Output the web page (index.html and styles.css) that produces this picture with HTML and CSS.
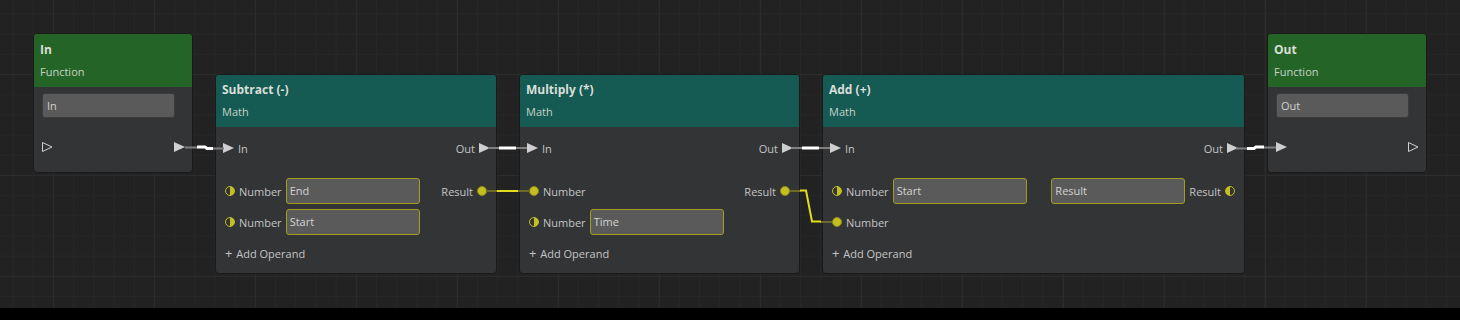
FILE: index.html
```html
<!DOCTYPE html>
<html lang="en">
<head>
  <meta charset="UTF-8">
  <title>Function Graph</title>
  <link rel="stylesheet" href="styles.css">
</head>
<body>
  <div class="graph">

    <!-- In -->
    <div class="node node-in">
      <div class="node-head head-fn">
        <div class="node-title">In</div>
        <div class="node-kind">Function</div>
      </div>
      <div class="fn-body">
        <div class="fn-field">In</div>
        <div class="fn-row">
          <svg class="pin-exec" width="11" height="10" viewBox="0 0 11 10"><polygon points="0.5,0.5 10,5 0.5,9.5" class="tri-open" /></svg>
          <svg class="pin-exec" width="11" height="10" viewBox="0 0 11 10"><polygon points="0,0 11,5 0,10" class="tri-fill" /></svg>
        </div>
      </div>
    </div>

    <!-- Subtract -->
    <div class="node node-subtract">
      <div class="node-head head-math">
        <div class="node-title">Subtract (-)</div>
        <div class="node-kind">Math</div>
      </div>
      <div class="node-body">
        <div class="exec-row">
          <span class="port">
            <svg class="pin-exec" width="11" height="10" viewBox="0 0 11 10"><polygon points="0,0 11,5 0,10" class="tri-fill" /></svg>
            In
          </span>
          <span class="port">
            Out
            <svg class="pin-exec" width="11" height="10" viewBox="0 0 11 10"><polygon points="0,0 11,5 0,10" class="tri-fill" /></svg>
          </span>
        </div>
        <div class="data-row">
          <span class="port">
            <span class="pin-half"></span>
            <span class="lbl">Number</span>
            <span class="field">End</span>
          </span>
          <span class="port">
            <span class="lbl">Result</span>
            <span class="pin-dot"></span>
          </span>
        </div>
        <div class="data-row">
          <span class="port">
            <span class="pin-half"></span>
            <span class="lbl">Number</span>
            <span class="field">Start</span>
          </span>
        </div>
        <div class="add-row"><span class="plus">+</span> Add Operand</div>
      </div>
    </div>

    <!-- Multiply -->
    <div class="node node-multiply">
      <div class="node-head head-math">
        <div class="node-title">Multiply (*)</div>
        <div class="node-kind">Math</div>
      </div>
      <div class="node-body">
        <div class="exec-row">
          <span class="port">
            <svg class="pin-exec" width="11" height="10" viewBox="0 0 11 10"><polygon points="0,0 11,5 0,10" class="tri-fill" /></svg>
            In
          </span>
          <span class="port">
            Out
            <svg class="pin-exec" width="11" height="10" viewBox="0 0 11 10"><polygon points="0,0 11,5 0,10" class="tri-fill" /></svg>
          </span>
        </div>
        <div class="data-row">
          <span class="port">
            <span class="pin-dot"></span>
            <span class="lbl">Number</span>
          </span>
          <span class="port">
            <span class="lbl">Result</span>
            <span class="pin-dot"></span>
          </span>
        </div>
        <div class="data-row">
          <span class="port">
            <span class="pin-half"></span>
            <span class="lbl">Number</span>
            <span class="field">Time</span>
          </span>
        </div>
        <div class="add-row"><span class="plus">+</span> Add Operand</div>
      </div>
    </div>

    <!-- Add -->
    <div class="node node-add">
      <div class="node-head head-math">
        <div class="node-title">Add (+)</div>
        <div class="node-kind">Math</div>
      </div>
      <div class="node-body">
        <div class="exec-row">
          <span class="port">
            <svg class="pin-exec" width="11" height="10" viewBox="0 0 11 10"><polygon points="0,0 11,5 0,10" class="tri-fill" /></svg>
            In
          </span>
          <span class="port">
            Out
            <svg class="pin-exec" width="11" height="10" viewBox="0 0 11 10"><polygon points="0,0 11,5 0,10" class="tri-fill" /></svg>
          </span>
        </div>
        <div class="data-row">
          <span class="port">
            <span class="pin-half"></span>
            <span class="lbl">Number</span>
            <span class="field">Start</span>
          </span>
          <span class="port">
            <span class="field">Result</span>
            <span class="lbl">Result</span>
            <span class="pin-half pin-half-out"></span>
          </span>
        </div>
        <div class="data-row">
          <span class="port">
            <span class="pin-dot"></span>
            <span class="lbl">Number</span>
          </span>
        </div>
        <div class="add-row"><span class="plus">+</span> Add Operand</div>
      </div>
    </div>

    <!-- Out -->
    <div class="node node-out">
      <div class="node-head head-fn">
        <div class="node-title">Out</div>
        <div class="node-kind">Function</div>
      </div>
      <div class="fn-body">
        <div class="fn-field">Out</div>
        <div class="fn-row">
          <svg class="pin-exec" width="11" height="10" viewBox="0 0 11 10"><polygon points="0,0 11,5 0,10" class="tri-fill" /></svg>
          <svg class="pin-exec" width="11" height="10" viewBox="0 0 11 10"><polygon points="0.5,0.5 10,5 0.5,9.5" class="tri-open" /></svg>
        </div>
      </div>
    </div>

    <!-- wires, drawn over the node edges -->
    <svg class="wires" width="1460" height="308">
      <!-- exec wires -->
      <g class="stub-exec">
        <line x1="185" y1="147.5" x2="198" y2="147.5" />
        <line x1="212" y1="148.5" x2="224" y2="148.5" />
        <line x1="488" y1="148" x2="500" y2="148" />
        <line x1="515" y1="148" x2="527" y2="148" />
        <line x1="791" y1="148" x2="803" y2="148" />
        <line x1="818" y1="148" x2="830" y2="148" />
        <line x1="1236" y1="148.5" x2="1248" y2="148.5" />
        <line x1="1263" y1="147.5" x2="1276" y2="147.5" />
      </g>
      <g class="wire-exec">
        <path d="M197 147 H205 L207 148.5 H213" />
        <path d="M499 148 H516" />
        <path d="M802 148 H819" />
        <path d="M1247 148.5 H1254 L1256 147 H1264" />
      </g>
      <!-- data wires -->
      <g class="stub-data">
        <line x1="486" y1="191" x2="498" y2="191" />
        <line x1="517" y1="191" x2="530" y2="191" />
        <line x1="790" y1="191" x2="801" y2="191" />
        <line x1="820" y1="222" x2="832" y2="222" />
      </g>
      <g class="wire-data">
        <path d="M497 191 H518" />
        <path d="M800 190.5 H806 L812 221.5 H821" />
      </g>
    </svg>

  </div>
</body>
</html>
```

FILE: styles.css
```css
body {
  margin: 0;
  background-color: #000;
  font-family: 'Open Sans', 'Noto Sans', sans-serif;
  font-size: 11px;
  color: #c4c4c4;
}

.graph {
  position: relative;
  width: 1460px;
  height: 308px;
  overflow: hidden;
  background-color: #222222;
  background-image:
    linear-gradient(to right, #2c2c2c 1px, transparent 1px),
    linear-gradient(to bottom, #2c2c2c 1px, transparent 1px),
    linear-gradient(to right, #272727 1px, transparent 1px),
    linear-gradient(to bottom, #272727 1px, transparent 1px);
  background-size: 101px 101px, 101px 101px, 20.2px 20.2px, 20.2px 20.2px;
  background-position: 53px 74px, 53px 74px, 53px 74px, 53px 74px;
}

.wires {
  position: absolute;
  left: 0;
  top: 0;
  pointer-events: none;
}

.stub-exec line {
  stroke: #808080;
  stroke-width: 2;
}

.wire-exec path {
  stroke: #ffffff;
  stroke-width: 3;
  fill: none;
}

.stub-data line {
  stroke: #6b6a2c;
  stroke-width: 2;
}

.wire-data path {
  stroke: #e2dc1a;
  stroke-width: 2;
  fill: none;
}

/* nodes */

.node {
  position: absolute;
  box-sizing: border-box;
  background-color: #333436;
  border: 1px solid #1a1a1a;
  border-radius: 4px;
}

.node-in {
  left: 33px;
  top: 33px;
  width: 160px;
  height: 140px;
}

.node-out {
  left: 1267px;
  top: 33px;
  width: 160px;
  height: 140px;
}

.node-subtract {
  left: 215px;
  top: 74px;
  width: 282px;
  height: 200px;
}

.node-multiply {
  left: 519px;
  top: 74px;
  width: 281px;
  height: 200px;
}

.node-add {
  left: 822px;
  top: 74px;
  width: 423px;
  height: 200px;
}

.node-head {
  box-sizing: border-box;
  padding: 6px 6px 0;
  border-radius: 3px 3px 0 0;
}

.head-fn {
  height: 53px;
  padding-top: 7px;
  background-color: #246527;
}

.head-math {
  height: 52px;
  background-color: #155a53;
}

.node-title {
  font-weight: bold;
  font-size: 12px;
  line-height: 18px;
  color: #d9dfd9;
}

.node-kind {
  margin-top: 4px;
  line-height: 18px;
  color: #c6d2c8;
}

.node-body {
  padding-top: 11px;
}

/* function nodes */

.fn-body {
  padding: 6px 0 0 8px;
}

.fn-field {
  width: 133px;
  height: 25px;
  box-sizing: border-box;
  background-color: #5a5a5a;
  border: 1px solid #3c3c3c;
  border-radius: 3px;
  padding: 0 4px;
  line-height: 23px;
  color: #d2d2d2;
}

.fn-row {
  display: flex;
  justify-content: space-between;
  align-items: center;
  height: 20px;
  margin-top: 19px;
  padding-right: 7px;
}

.tri-fill {
  fill: #cfcfcf;
}

.tri-open {
  fill: none;
  stroke: #d0d0d0;
  stroke-width: 1;
}

/* math nodes */

.exec-row {
  display: flex;
  justify-content: space-between;
  align-items: center;
  height: 20px;
  padding: 0 6px 0 7px;
}

.port {
  display: flex;
  align-items: center;
  gap: 4px;
}

.pin-exec {
  display: block;
}

.data-row {
  display: flex;
  justify-content: space-between;
  align-items: center;
  height: 26px;
  margin-top: 5px;
  padding: 0 9px;
}

.exec-row + .data-row {
  margin-top: 20px;
}

.pin-dot {
  width: 10px;
  height: 10px;
  box-sizing: border-box;
  border-radius: 50%;
  background-color: #c3bf1f;
  border: 1px solid #8d8a18;
}

.pin-half {
  width: 10px;
  height: 10px;
  box-sizing: border-box;
  border-radius: 50%;
  border: 1.5px solid #c3bf1f;
  background: linear-gradient(to right, #333436 50%, #c3bf1f 50%);
}

.pin-half-out {
  background: linear-gradient(to right, #c3bf1f 50%, #333436 50%);
}

.field {
  width: 134px;
  height: 26px;
  box-sizing: border-box;
  background-color: #5a5a5a;
  border: 1px solid #a19e1e;
  border-radius: 3px;
  padding: 0 3px;
  line-height: 24px;
  color: #d4d4d4;
}

.add-row {
  height: 26px;
  line-height: 26px;
  margin-top: 5px;
  padding: 0 9px;
}

.plus {
  font-size: 13px;
  margin-right: 1px;
}
```
